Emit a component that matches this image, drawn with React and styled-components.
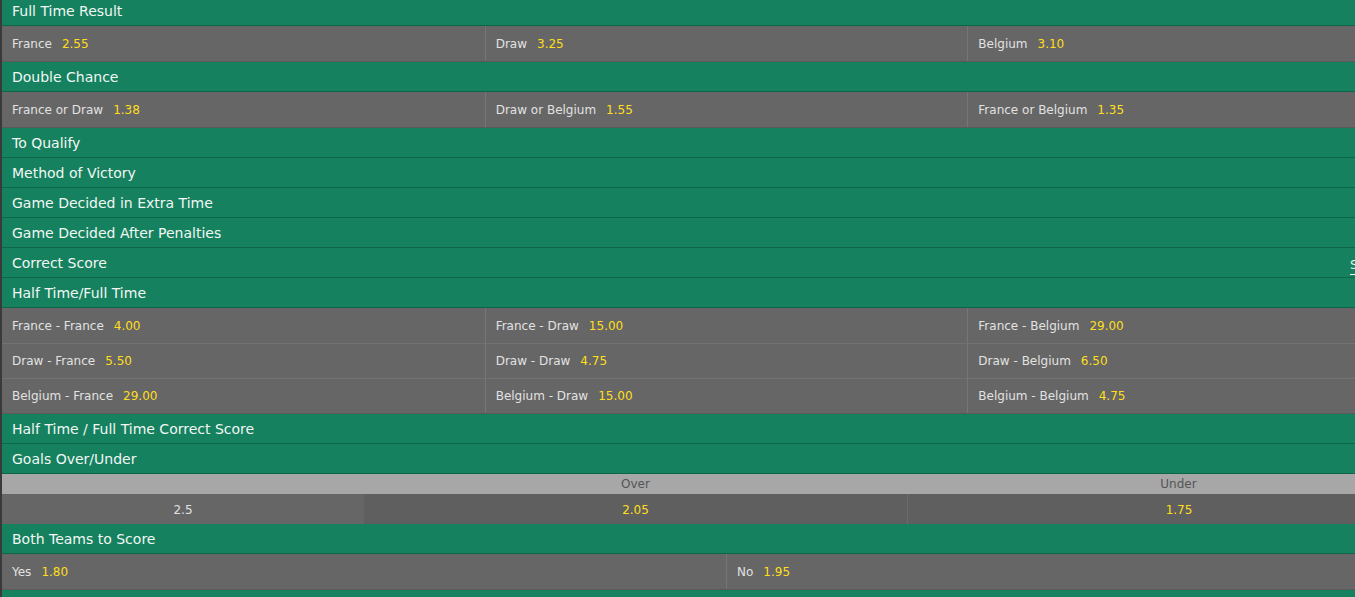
import React from "react";
import styled, { createGlobalStyle } from "styled-components";

const GlobalStyle = createGlobalStyle`
  html, body {
    margin: 0;
    padding: 0;
    background: #3a3a3a;
    overflow: hidden;
  }
  body {
    font-family: "DejaVu Sans", Verdana, sans-serif;
  }
`;

const markets = [
  {
    title: "Full Time Result",
    rows: [[["France", "2.55"], ["Draw", "3.25"], ["Belgium", "3.10"]]],
  },
  {
    title: "Double Chance",
    rows: [
      [
        ["France or Draw", "1.38"],
        ["Draw or Belgium", "1.55"],
        ["France or Belgium", "1.35"],
      ],
    ],
  },
  { title: "To Qualify" },
  { title: "Method of Victory" },
  { title: "Game Decided in Extra Time" },
  { title: "Game Decided After Penalties" },
  { title: "Correct Score", extra: "Show All" },
  {
    title: "Half Time/Full Time",
    rows: [
      [
        ["France - France", "4.00"],
        ["France - Draw", "15.00"],
        ["France - Belgium", "29.00"],
      ],
      [
        ["Draw - France", "5.50"],
        ["Draw - Draw", "4.75"],
        ["Draw - Belgium", "6.50"],
      ],
      [
        ["Belgium - France", "29.00"],
        ["Belgium - Draw", "15.00"],
        ["Belgium - Belgium", "4.75"],
      ],
    ],
  },
  { title: "Half Time / Full Time Correct Score" },
  { title: "Goals Over/Under", overUnder: { line: "2.5", over: "2.05", under: "1.75" } },
  {
    title: "Both Teams to Score",
    rows: [[["Yes", "1.80"], ["No", "1.95"]]],
  },
  // next market header, only its top edge is in view
  { title: "" },
];

const App = () => {
  return (
    <React.Fragment>
      <GlobalStyle />
      <Page>
        {markets.map((m, idx) => (
          <Market key={idx}>
            <Header>
              <HeaderTitle>{m.title}</HeaderTitle>
              {m.extra && <HeaderLink>{m.extra}</HeaderLink>}
            </Header>
            {m.rows && (
              <OddsGroup>
                {m.rows.map((row, i) => (
                  <OddsRow key={i} cols={row.length}>
                    {row.map(([name, price]) => (
                      <Cell key={name}>
                        <Name>{name}</Name>
                        <Price>{price}</Price>
                      </Cell>
                    ))}
                  </OddsRow>
                ))}
              </OddsGroup>
            )}
            {m.overUnder && (
              <OverUnder>
                <OuHead />
                <OuHead>Over</OuHead>
                <OuHead>Under</OuHead>
                <OuLine>{m.overUnder.line}</OuLine>
                <OuPrice>{m.overUnder.over}</OuPrice>
                <OuPrice divided>{m.overUnder.under}</OuPrice>
              </OverUnder>
            )}
          </Market>
        ))}
      </Page>
    </React.Fragment>
  );
};

const Page = styled.div`
  width: 1448px;
  margin-top: -4px;
  border-left: 2px solid #3a3a3a;
  background: #666666;
`;

const Market = styled.div`
  display: flex;
  flex-direction: column;
`;

const Header = styled.div`
  height: 29px;
  display: flex;
  align-items: center;
  padding-left: 10px;
  background-color: #15815f;
  border-bottom: 1px solid #0f6549;
  color: #f2f7f4;
  font-size: 14px;
`;

const HeaderTitle = styled.div`
  flex: 1;
`;

const HeaderLink = styled.div`
  width: 100px;
  font-size: 12px;
  color: #e6efe9;
  padding-bottom: 2px;
  border-bottom: 1px solid #ffffff;
  align-self: flex-end;
  margin-bottom: 2px;
`;

const OddsGroup = styled.div`
  border-bottom: 1px solid #5a5a5a;
`;

const OddsRow = styled.div`
  display: grid;
  grid-template-columns: repeat(${(p) => p.cols}, 1fr);
  height: 35px;
  background: #666666;
  & + & {
    border-top: 1px solid #727272;
    height: 34px;
  }
`;

const Cell = styled.div`
  display: flex;
  align-items: center;
  padding-left: 10px;
  font-size: 12px;
  & + & {
    border-left: 1px solid #767676;
  }
`;

const Name = styled.span`
  color: #e2e2e2;
`;

const Price = styled.span`
  color: #ffdf1b;
  margin-left: 10px;
`;

const OverUnder = styled.div`
  display: grid;
  grid-template-columns: 25% 37.5% 37.5%;
  grid-template-rows: 20px 30px;
  font-size: 12px;
`;

const OuHead = styled.div`
  background: #a7a7a7;
  color: #555555;
  display: flex;
  align-items: center;
  justify-content: center;
`;

const OuLine = styled.div`
  background: #666666;
  color: #e2e2e2;
  display: flex;
  align-items: center;
  justify-content: center;
  padding-top: 1px;
`;

const OuPrice = styled.div`
  background: #5f5f5f;
  color: #ffdf1b;
  display: flex;
  align-items: center;
  justify-content: center;
  padding-top: 1px;
  border-left: ${(p) => (p.divided ? "1px solid #6c6c6c" : "none")};
`;

export default App;
